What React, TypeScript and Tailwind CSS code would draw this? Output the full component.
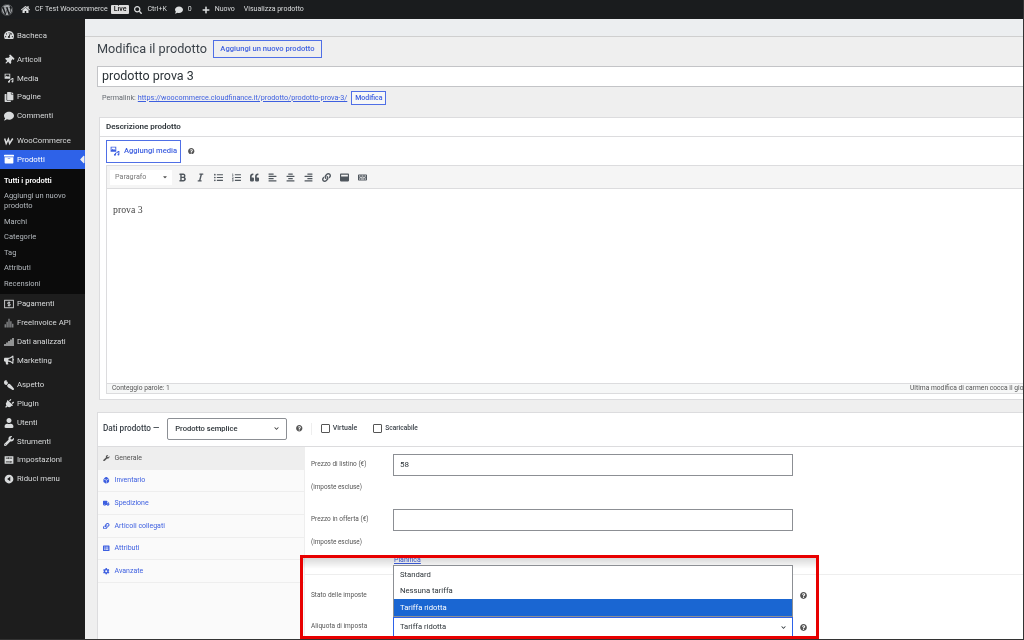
import type { ComponentType, ReactNode } from "react";
import {
  FaArchive,
  FaBold,
  FaBullhorn,
  FaCog,
  FaComment,
  FaCopy,
  FaHome,
  FaItalic,
  FaKeyboard,
  FaLink,
  FaListAlt,
  FaListOl,
  FaListUl,
  FaPaintBrush,
  FaPlug,
  FaPlus,
  FaQuestionCircle,
  FaQuoteLeft,
  FaSearch,
  FaSignal,
  FaTachometerAlt,
  FaThumbtack,
  FaTruck,
  FaUser,
  FaWordpress,
  FaWrench,
  FaAlignCenter,
  FaAlignLeft,
  FaAlignRight,
  FaChevronDown,
  FaCaretDown,
  FaCaretLeft,
  FaDiceD6,
  FaWindowMaximize,
} from "react-icons/fa";

type Icon = ComponentType<{ className?: string }>;

function WooIcon({ className }: { className?: string }) {
  return (
    <svg viewBox="0 0 16 12" className={className} fill="none" stroke="currentColor" strokeWidth="2.4">
      <path d="M1 2l2.5 8L7 3l2 7 5-8" />
    </svg>
  );
}

function CollapseIcon({ className }: { className?: string }) {
  return (
    <svg viewBox="0 0 16 16" className={className}>
      <circle cx="8" cy="8" r="7" fill="currentColor" />
      <path d="M10 4.5v7L5 8z" fill="#1d1d1d" />
    </svg>
  );
}

function MediaIcon({ className }: { className?: string }) {
  return (
    <svg viewBox="0 0 16 16" className={className} fill="currentColor">
      <path fillRule="evenodd" d="M1 1h9v8H1zM2.5 2.5v4l2-2 1.5 1.5 1-1 1.5 1.5V2.5z" />
      <path d="M8 11l5-2v1.5l-3.5 1.3V14a1.6 1.6 0 1 1-1.5-1.5zM12 8h3v5.5a1.5 1.5 0 1 1-1.5-1.5V9.5H12z" />
    </svg>
  );
}

function PaymentIcon({ className }: { className?: string }) {
  return (
    <svg viewBox="0 0 16 16" className={className} fill="none" stroke="currentColor">
      <rect x="1" y="2" width="14" height="12" strokeWidth="1.4" />
      <path d="M10 5.5H7a1.2 1.2 0 0 0 0 2.5h2a1.2 1.2 0 0 1 0 2.5H6M8 4v8" strokeWidth="1.4" />
    </svg>
  );
}

function InvoiceIcon({ className }: { className?: string }) {
  return (
    <svg viewBox="0 0 16 16" className={className} fill="#8d8f91">
      <path d="M1 10h2v5H1zM4 6h2v9H4zM7 1h2v14H7zM10 5h2v10h-2zM13 9h2v6h-2z" />
    </svg>
  );
}

function SettingsIcon({ className }: { className?: string }) {
  return (
    <svg viewBox="0 0 16 16" className={className}>
      <rect x="1" y="2" width="14" height="12" fill="currentColor" />
      <path d="M3 5h4M9 5h4M3 11h6M11 11h2M7.5 3.5v3M10 9.5v3" stroke="#1d1d1d" strokeWidth="1.3" />
    </svg>
  );
}

function MenuRow({
  icon: RowIcon,
  label,
  active,
  iconClass = "",
}: {
  icon: Icon;
  label: string;
  active?: boolean;
  iconClass?: string;
}) {
  return (
    <div
      className={`relative flex h-[18.75px] items-center ${
        active ? "bg-[#2e62e8] text-white" : "text-[#d8dadb]"
      }`}
    >
      <span className="flex w-[17px] justify-center">
        <RowIcon className={`h-[10px] w-[10px] ${iconClass}`} />
      </span>
      <span className="text-[7.8px]">{label}</span>
      {active && (
        <FaCaretLeft className="absolute -right-[1px] h-[13px] w-[8px] text-[#efefef]" />
      )}
    </div>
  );
}

function SubRow({ children, strong }: { children: ReactNode; strong?: boolean }) {
  return (
    <div
      className={`px-[4px] text-[7.5px] leading-[10px] ${
        strong ? "font-semibold text-white" : "text-[#b4b9be]"
      }`}
    >
      {children}
    </div>
  );
}

function Sidebar() {
  return (
    <aside className="flex w-[85px] shrink-0 flex-col bg-[#1d1d1d] pt-[7px]">
      <MenuRow icon={FaTachometerAlt} label="Bacheca" />
      <div className="mt-[5.5px]">
        <MenuRow icon={FaThumbtack} label="Articoli" iconClass="rotate-45" />
        <MenuRow icon={MediaIcon} label="Media" />
        <MenuRow icon={FaCopy} label="Pagine" />
        <MenuRow icon={FaComment} label="Commenti" />
      </div>
      <div className="mt-[6px]">
        <MenuRow icon={WooIcon} label="WooCommerce" />
        <MenuRow icon={FaArchive} label="Prodotti" active />
      </div>
      <div className="flex h-[125px] flex-col gap-[5.5px] bg-[#0b0b0b] pt-[7px]">
        <SubRow strong>Tutti i prodotti</SubRow>
        <SubRow>
          Aggiungi un nuovo
          <br />
          prodotto
        </SubRow>
        <SubRow>Marchi</SubRow>
        <SubRow>Categorie</SubRow>
        <SubRow>Tag</SubRow>
        <SubRow>Attributi</SubRow>
        <SubRow>Recensioni</SubRow>
      </div>
      <div className="pt-[1px]">
        <MenuRow icon={PaymentIcon} label="Pagamenti" />
        <MenuRow icon={InvoiceIcon} label="FreeInvoice API" />
        <MenuRow icon={FaSignal} label="Dati analizzati" />
        <MenuRow icon={FaBullhorn} label="Marketing" />
      </div>
      <div className="mt-[6px]">
        <MenuRow icon={FaPaintBrush} label="Aspetto" iconClass="rotate-90" />
        <MenuRow icon={FaPlug} label="Plugin" iconClass="rotate-45" />
        <MenuRow icon={FaUser} label="Utenti" />
        <MenuRow icon={FaWrench} label="Strumenti" />
        <MenuRow icon={SettingsIcon} label="Impostazioni" />
        <MenuRow icon={CollapseIcon} label="Riduci menu" />
      </div>
    </aside>
  );
}

function TopBar() {
  return (
    <header className="flex h-[19px] shrink-0 items-center bg-[#1a1c1e] text-[7px] text-[#dcdedf]">
      <FaWordpress className="ml-[1px] h-[12px] w-[12px] text-[#a7aaad]" />
      <FaHome className="ml-[8px] h-[9px] w-[9px]" />
      <span className="ml-[5px]">CF Test Woocommerce</span>
      <span className="ml-[3px] rounded-[1px] bg-[#dcdcdc] px-[3px] text-[7px] leading-[9px] font-semibold text-[#222]">
        Live
      </span>
      <FaSearch className="ml-[5px] h-[8px] w-[8px]" />
      <span className="ml-[5px]">Ctrl+K</span>
      <FaComment className="ml-[8px] h-[8px] w-[8px]" />
      <span className="ml-[5px]">0</span>
      <FaPlus className="ml-[10px] h-[8px] w-[8px]" />
      <span className="ml-[5px]">Nuovo</span>
      <span className="ml-[9px]">Visualizza prodotto</span>
    </header>
  );
}

const toolbarIcons: Icon[] = [
  FaBold,
  FaItalic,
  FaListUl,
  FaListOl,
  FaQuoteLeft,
  FaAlignLeft,
  FaAlignCenter,
  FaAlignRight,
  FaLink,
  FaWindowMaximize,
  FaKeyboard,
];

function DescriptionPanel() {
  return (
    <section className="ml-[2px] flex h-[283px] w-[1060px] flex-col border border-[#dcdcde] bg-white pb-[5px]">
      <div className="flex h-[19px] shrink-0 items-center border-b border-[#dcdcde] px-[6px] text-[8px] font-semibold text-[#2c3338]">
        Descrizione prodotto
      </div>
      <div className="flex h-[28px] shrink-0 items-center px-[6px]">
        <div className="flex h-[23px] w-[75px] items-center justify-center gap-[4px] border border-[#4f6fe6] text-[7.6px] font-medium text-[#3d5fe0]">
          <MediaIcon className="h-[10px] w-[10px]" />
          Aggiungi media
        </div>
        <FaQuestionCircle className="ml-[7px] h-[6.5px] w-[6.5px] text-[#555]" />
      </div>
      <div className="mx-[6px] flex min-h-0 flex-1 flex-col border-x border-b border-[#dcdcde]">
        <div className="flex h-[24px] shrink-0 items-center border-y border-[#dcdcde] bg-[#f5f5f5] pl-[3px] text-[#50575e]">
          <div className="flex h-[15px] w-[62px] items-center justify-between bg-white pr-[4px] pl-[5px] text-[7.2px] text-[#777]">
            Paragrafo
            <FaCaretDown className="h-[6px] w-[6px] text-[#555]" />
          </div>
          <div className="ml-[6px] flex items-center gap-[9px]">
            {toolbarIcons.map((ToolIcon, i) => (
              <ToolIcon key={i} className="h-[9px] w-[9px]" />
            ))}
          </div>
        </div>
        <div className="flex-1 px-[6px] pt-[14px] font-['Liberation_Serif',serif] text-[9.8px] text-[#444]">
          prova 3
        </div>
        <div className="flex h-[10px] shrink-0 items-center border-t border-[#dcdcde] bg-[#f6f7f7] pl-[5px] text-[6.7px] whitespace-nowrap text-[#555]">
          <span>Conteggio parole: 1</span>
          <span className="ml-auto w-[241px]">Ultima modifica di carmen cocca il gio</span>
        </div>
      </div>
    </section>
  );
}

const tabs: { icon: Icon; label: string }[] = [
  { icon: FaWrench, label: "Generale" },
  { icon: FaDiceD6, label: "Inventario" },
  { icon: FaTruck, label: "Spedizione" },
  { icon: FaLink, label: "Articoli collegati" },
  { icon: FaListAlt, label: "Attributi" },
  { icon: FaCog, label: "Avanzate" },
];

function PriceField({ label, value }: { label: string; value?: string }) {
  return (
    <div>
      <div className="flex h-[22px] items-center">
        <span className="w-[82px] text-[6.5px] text-[#555]">{label}</span>
        <div className="flex h-[22px] w-[400px] items-center border border-[#8c8f94] bg-white px-[6px] text-[8px] text-[#2c3338]">
          {value}
        </div>
      </div>
      <div className="mt-[6px] text-[6.4px] leading-[10px] text-[#555]">(imposte escluse)</div>
    </div>
  );
}

function ProductDataPanel() {
  return (
    <section className="mt-[12px] flex w-[1060px] flex-1 flex-col border-t border-l border-[#dcdcde] bg-white">
      <div className="flex h-[34px] shrink-0 items-center border-b border-[#dcdcde] pb-[2px] pl-[5px]">
        <span className="text-[8.2px] font-medium text-[#3c434a]">Dati prodotto —</span>
        <div className="ml-[8px] flex h-[22px] w-[120px] items-center justify-between rounded-[2px] border border-[#8c8f94] pr-[7px] pl-[7px] text-[7.6px] font-medium text-[#2c3338]">
          Prodotto semplice
          <FaChevronDown className="h-[5px] w-[5px] text-[#333]" />
        </div>
        <FaQuestionCircle className="ml-[9px] h-[6.5px] w-[6.5px] text-[#555]" />
        <span className="ml-[8px] h-[12px] w-[1px] bg-[#eee]" />
        <span className="ml-[9px] h-[9px] w-[9px] rounded-[1px] border border-[#555]" />
        <span className="ml-[3px] text-[7px] font-medium text-[#3c434a]">Virtuale</span>
        <span className="ml-[16px] h-[9px] w-[9px] rounded-[1px] border border-[#555]" />
        <span className="ml-[3px] text-[6.6px] font-medium text-[#3c434a]">Scaricabile</span>
      </div>
      <div className="flex min-h-0 flex-1">
        <nav className="w-[207px] shrink-0 border-r border-[#eeeeee] bg-[#fafafa]">
          {tabs.map((tab, i) => (
            <div
              key={tab.label}
              className={`flex h-[22.7px] items-center border-b border-[#eee] pl-[5px] text-[7px] ${
                i === 0 ? "bg-[#eeeeee] text-[#555]" : "text-[#3d5fe0]"
              }`}
            >
              <tab.icon className="h-[6.5px] w-[6.5px]" />
              <span className="ml-[5px]">{tab.label}</span>
            </div>
          ))}
        </nav>
        <div className="flex-1 pt-[7px] pl-[6px]">
          <PriceField label="Prezzo di listino (€)" value="58" />
          <div className="mt-[17px]">
            <PriceField label="Prezzo in offerta (€)" />
          </div>
          <div className="mt-[8px] ml-[83px] text-[7px] leading-[10px] text-[#3d5fe0] underline">
            Pianifica
          </div>
          <div className="mt-[9px] -ml-[6px] h-[1px] bg-[#eee]" />
          <div className="relative flex h-[41px] items-center text-[6.5px] text-[#555]">
            <span>Stato delle imposte</span>
            <FaQuestionCircle className="absolute left-[489px] h-[7px] w-[7px] text-[#555]" />
          </div>
          <div className="relative flex h-[22px] items-center text-[6.5px] text-[#555]">
            <span>Aliquota di imposta</span>
            <div className="absolute left-[82px] flex h-[21px] w-[400px] items-center justify-between border border-[#2e62e8] bg-white pr-[6px] pl-[6px] text-[7.6px] text-[#2c3338]">
              Tariffa ridotta
              <FaChevronDown className="h-[5px] w-[5px]" />
            </div>
            <FaQuestionCircle className="absolute left-[489px] h-[7px] w-[7px] text-[#555]" />
          </div>
        </div>
      </div>
    </section>
  );
}

export default function App() {
  return (
    <div className="relative flex h-[640px] w-[1024px] flex-col overflow-hidden bg-[#efefef] font-['Roboto',sans-serif] blur-[0.5px]">
      <TopBar />
      <div className="flex min-h-0 flex-1">
        <Sidebar />
        <main className="flex min-w-0 flex-1 flex-col overflow-hidden">
          <div className="h-[18px] shrink-0 border-b border-[#cfcfcf] bg-[#eceef0]" />
          <div className="flex min-h-0 flex-1 flex-col pt-[3px] pl-[12px]">
            <div className="flex h-[18px] shrink-0 items-center">
              <h1 className="text-[12.7px] text-[#3c434a]">Modifica il prodotto</h1>
              <span className="ml-[6px] flex h-[18px] w-[109px] items-center justify-center border border-[#4f6fe6] text-[7.6px] font-medium text-[#3d5fe0]">
                Aggiungi un nuovo prodotto
              </span>
            </div>
            <div className="mt-[8px] flex h-[21px] w-[1060px] shrink-0 items-center border border-[#c3c4c7] bg-white px-[4px] text-[12.5px] text-[#2c3338]">
              prodotto prova 3
            </div>
            <div className="mt-[4px] flex h-[14px] shrink-0 items-center pl-[5px] text-[7.2px] text-[#646970]">
              Permalink:
              <span className="ml-[2px] text-[#3d5fe0] underline">
                https://woocommerce.cloudfinance.it/prodotto/prodotto-prova-3/
              </span>
              <span className="ml-[4px] flex h-[14px] w-[35px] items-center justify-center border border-[#4f6fe6] bg-[#f6f7f7] text-[7px] font-medium text-[#3d5fe0]">
                Modifica
              </span>
            </div>
            <div className="mt-[12px]">
              <DescriptionPanel />
            </div>
            <ProductDataPanel />
          </div>
        </main>
      </div>

      {/* red annotation drawn on top of the screenshot, with the open dropdown inside it */}
      <div className="absolute top-[555px] left-[300px] h-[84px] w-[519px] border-[3px] border-[#e80000] bg-gradient-to-b from-black/15 via-transparent via-[14%] to-transparent" />
      <div className="absolute top-[565px] left-[393px] flex h-[52px] w-[400px] flex-col border border-[#8c8f94] bg-white text-[7.7px] text-[#2c3338]">
        <div className="flex h-[17px] items-center pl-[6px]">Standard</div>
        <div className="flex h-[17px] items-center pl-[6px]">Nessuna tariffa</div>
        <div className="flex h-[17px] items-center bg-[#1a66d2] pl-[6px] text-white">Tariffa ridotta</div>
      </div>
      <div className="absolute top-0 right-0 bottom-0 w-[1px] bg-[#333]" />
      <div className="absolute right-0 bottom-0 left-0 h-[1px] bg-[#333]" />
    </div>
  );
}
